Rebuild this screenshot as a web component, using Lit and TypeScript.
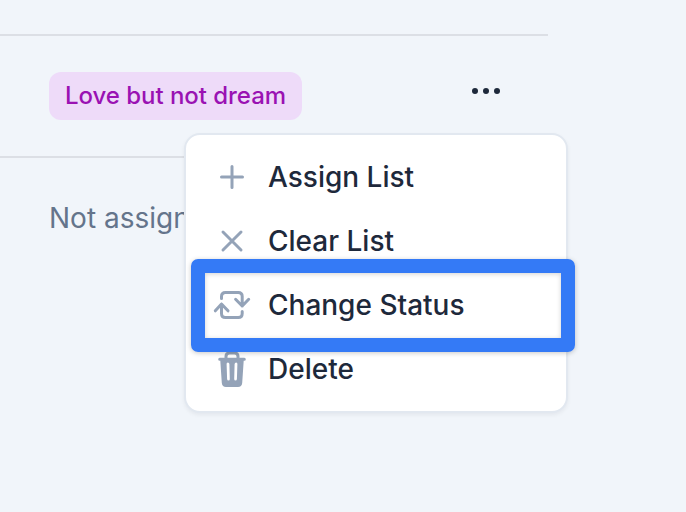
import { LitElement, html, css, svg } from "lit";
import { customElement, property } from "lit/decorators.js";

const icons: Record<string, unknown> = {
  plus: svg`<path d="M20 9.5V30.5M9.500 20H30.500" />`,
  clear: svg`<path d="M11 11L29 29M29 11L11 29" />`,
  swap: svg`<path d="M9.500 13.500V11.500Q9.500 7.500 13.500 7.500H26.200Q30.200 7.500 30.200 11.500V21M23.600 14.300L30.200 21L36.700 14.300M30.200 26.500V28.500Q30.200 32.500 26.200 32.500H13.500Q9.500 32.500 9.500 28.500V19M3.300 25.800L9.500 19L16 25.800" />`,
  trash: svg`
    <path d="M14 10V7.500Q14 4 17.500 4H22.500Q26 4 26 7.500V10M7.700 10.200H32.300" />
    <path class="solid" fill-rule="evenodd" d="M8.200 10.200H31.800L30.200 34Q29.800 38 26 38H14Q10.200 38 9.800 34ZM14.600 15L15.100 30Q15.200 31.500 16.500 31.500Q17.900 31.500 17.800 30L17.400 15Q17.300 13.500 15.900 13.500Q14.500 13.500 14.600 15ZM22.600 15L22.200 30Q22.200 31.500 23.500 31.500Q24.800 31.500 24.900 30L25.400 15Q25.500 13.500 24.100 13.500Q22.700 13.500 22.600 15Z" />`,
};

@customElement("menu-item")
class MenuItem extends LitElement {
  @property() icon = "plus";
  @property() label = "";

  static styles = css`
    :host { display: flex; align-items: center; gap: 16px; height: 64px; padding-left: 26px; }
    .icon { width: 40px; height: 40px; flex: none; fill: none; stroke: #94a3b8; stroke-width: 3; stroke-linecap: round; stroke-linejoin: round; }
    .solid { fill: #94a3b8; stroke: none; }
    .label { font-size: 28px; line-height: 40px; font-weight: 500; color: #1e293b; white-space: nowrap; }
  `;

  render() {
    return html`<svg class="icon" viewBox="0 0 40 40">${icons[this.icon]}</svg><span class="label">${this.label}</span>`;
  }
}

@customElement("app-root")
class AppRoot extends LitElement {
  static styles = css`
    :host { display: block; position: relative; box-sizing: border-box; width: 686px; height: 512px; overflow: hidden; background: #f1f5fa; font-family: Inter, "Liberation Sans", sans-serif; }
    .table { width: 548px; padding-top: 34px; }
    .row { box-sizing: border-box; height: 122px; border-top: 2px solid #dcdfe5; display: flex; align-items: center; justify-content: space-between; padding: 0 48px 0 49px; }
    .badge { height: 48px; line-height: 48px; padding: 0 16px; border-radius: 12px; background: #eedbf9; color: #9a12b3; font-size: 24px; font-weight: 500; letter-spacing: -0.04px; white-space: nowrap; }
    .muted { font-size: 28px; line-height: 40px; color: #64748b; }
    .dots { display: flex; gap: 5px; padding-bottom: 10px; }
    .dot { width: 6px; height: 6px; border-radius: 50%; background: #1e293b; }
    .menu { position: absolute; left: 184px; top: 133px; box-sizing: border-box; width: 384px; height: 280px; padding: 10px 0; border: 2px solid #e2e8f0; border-radius: 16px; background: #fff; box-shadow: 0 2px 4px rgba(15, 23, 42, 0.06); }
    .frame { position: absolute; left: 191px; top: 259px; box-sizing: border-box; width: 384px; height: 93px; border: 14px solid #347af6; border-radius: 7px; box-shadow: 0 1px 5px rgba(0, 0, 0, 0.22), inset 0 1px 5px rgba(0, 0, 0, 0.18); }
  `;

  render() {
    return html`
      <div class="table">
        <div class="row">
          <span class="badge">Love but not dream</span>
          <span class="dots"><i class="dot"></i><i class="dot"></i><i class="dot"></i></span>
        </div>
        <div class="row"><span class="muted">Not assigned</span></div>
      </div>
      <div class="menu">
        <menu-item icon="plus" label="Assign List"></menu-item>
        <menu-item icon="clear" label="Clear List"></menu-item>
        <menu-item icon="swap" label="Change Status"></menu-item>
        <menu-item icon="trash" label="Delete"></menu-item>
      </div>
      <div class="frame"></div>
    `;
  }
}
